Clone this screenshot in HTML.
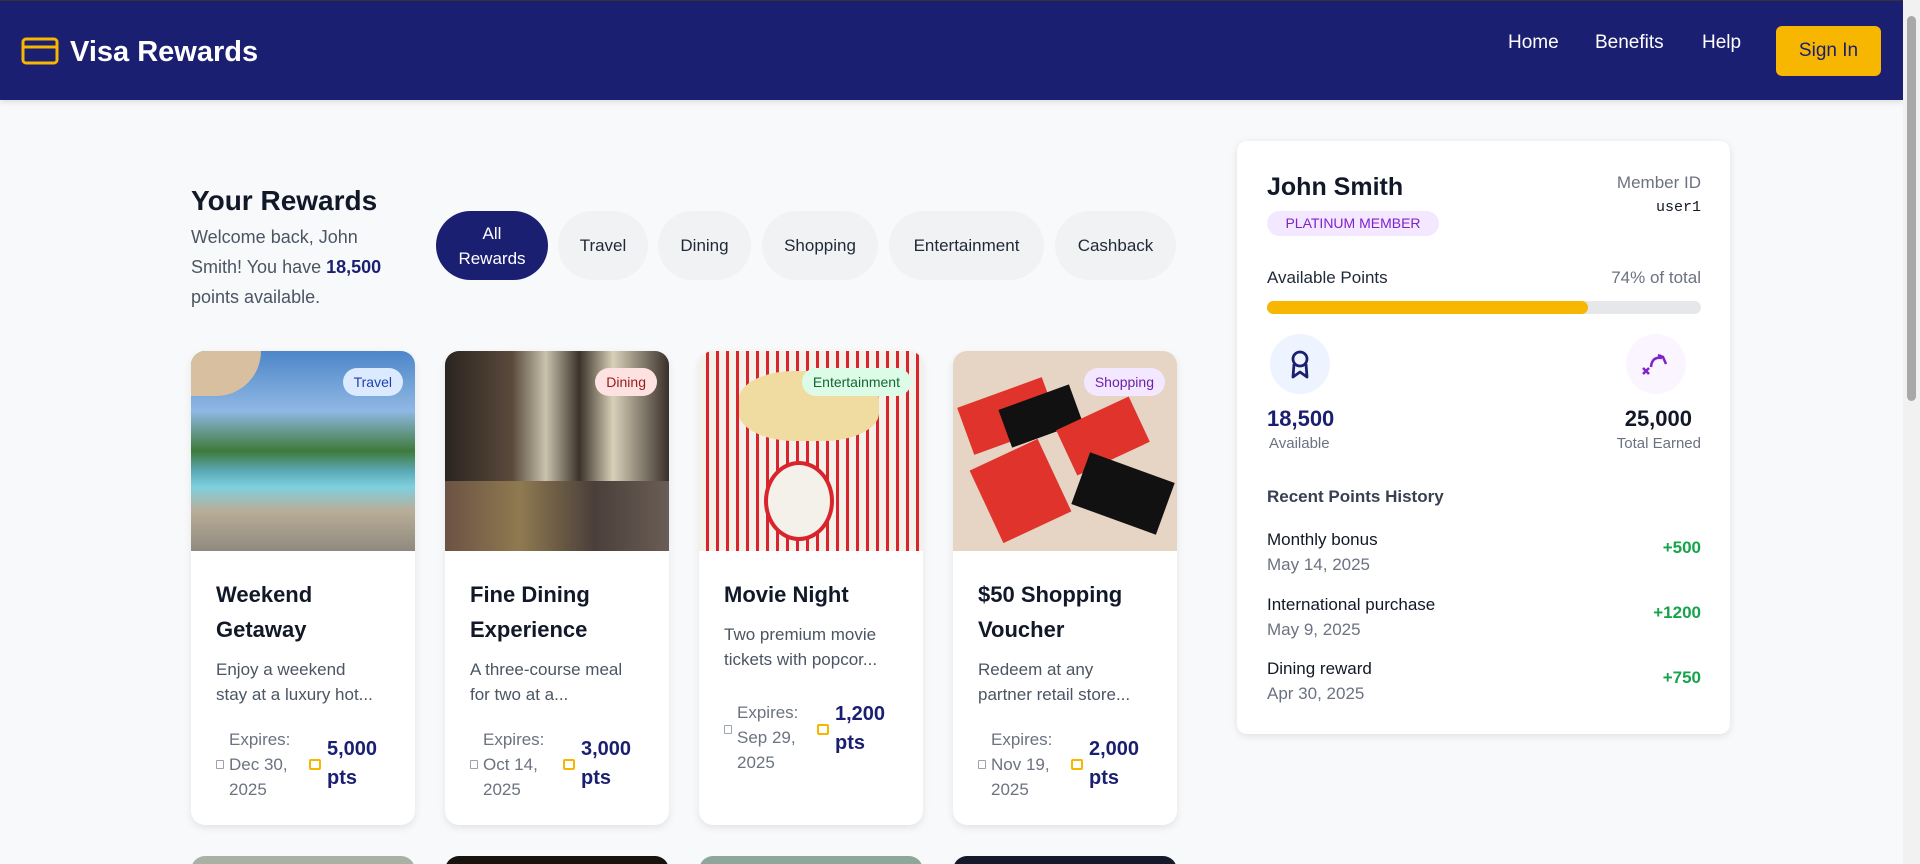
<!DOCTYPE html>
<html><head><meta charset="utf-8"><style>
*{box-sizing:border-box;margin:0;padding:0}
html,body{width:1920px;height:864px;overflow:hidden}
body{background:#f8f9fb;font-family:"Liberation Sans",sans-serif;color:#111827;position:relative}
.abs{position:absolute}
.hdr{left:0;top:0;width:1903px;height:100px;background:#1a1f71;border-top:1px solid #333;box-shadow:0 2px 6px rgba(0,0,0,.12)}
.nav{color:#fff;font-size:19px;top:32px}
.pill{top:211px;height:69px;border-radius:35px;background:#f1f2f4;font-size:17px;color:#1f2937;display:flex;align-items:center;justify-content:center;text-align:center;line-height:25px}
.card{width:224px;height:474px;top:351px;background:#fff;border-radius:14px;overflow:hidden;box-shadow:0 3px 8px rgba(0,0,0,.09)}
.img{position:absolute;left:0;top:0;width:224px;height:200px}
.badge{position:absolute;top:17px;right:12px;height:28px;line-height:28px;padding:0 11px;border-radius:14px;font-size:14px}
.t{position:absolute;left:25px;font-size:22px;font-weight:bold;line-height:35px;color:#111827}
.d{position:absolute;left:25px;font-size:17px;line-height:25px;color:#4b5563}
.ex{position:absolute;left:38px;font-size:17px;line-height:25px;color:#6b7280}
.pt{position:absolute;left:136px;font-size:20px;font-weight:bold;line-height:29px;color:#1a1f71}
.cal{position:absolute;left:25px;width:8px;height:9px;border:1.5px solid #9ca3af;border-radius:1px}
.wal{position:absolute;left:118px;width:12px;height:11px;border:2px solid #f7b600;border-radius:2px}
.r2{top:856px;height:40px;width:224px;border-radius:14px 14px 0 0}
.rr{right:219px;text-align:right}
</style></head><body>
<div class="abs hdr"></div>
<svg class="abs" style="left:21px;top:37px" width="38" height="28" viewBox="0 0 38 28"><rect x="2" y="2" width="34" height="24" rx="3" fill="none" stroke="#f7b600" stroke-width="3"/><line x1="2" y1="10" x2="36" y2="10" stroke="#f7b600" stroke-width="3"/></svg>
<div class="abs" style="left:70px;top:36px;color:#fff;font-size:29px;font-weight:bold">Visa Rewards</div>
<div class="abs nav" style="left:1508px">Home</div>
<div class="abs nav" style="left:1595px">Benefits</div>
<div class="abs nav" style="left:1702px">Help</div>
<div class="abs" style="left:1776px;top:26px;width:105px;height:50px;background:#f7b600;border-radius:6px;color:#1a1f71;font-size:19px;text-align:center;line-height:50px">Sign In</div>
<div class="abs" style="left:1903px;top:0;width:17px;height:864px;background:#f1f1f1"></div>
<div class="abs" style="left:1907px;top:16px;width:9px;height:385px;background:#a8a8a8;border-radius:5px"></div>

<div class="abs" style="left:191px;top:185px;font-size:28px;font-weight:bold">Your Rewards</div>
<div class="abs" style="left:191px;top:222px;font-size:18px;line-height:30px;color:#4b5563">Welcome back, John<br>Smith! You have <b style="color:#1a1f71">18,500</b><br>points available.</div>
<div class="abs pill" style="left:436px;width:112px;background:#1a1f71;color:#fff">All<br>Rewards</div>
<div class="abs pill" style="left:558px;width:90px">Travel</div>
<div class="abs pill" style="left:658px;width:93px">Dining</div>
<div class="abs pill" style="left:762px;width:116px">Shopping</div>
<div class="abs pill" style="left:889px;width:155px">Entertainment</div>
<div class="abs pill" style="left:1055px;width:121px">Cashback</div>

<div class="abs card" style="left:191px">
<div class="img" style="background:linear-gradient(180deg,#4d86c9 0%,#8fb8e3 30%,#3f7a3c 50%,#5aa9b5 60%,#7fd0df 68%,#b9ad98 80%,#8f8a7e 100%)"></div>
<div class="abs" style="left:0;top:0;width:70px;height:45px;background:#d8bfa0;border-radius:0 0 50px 0"></div>
<div class="badge" style="background:#dbeafe;color:#1e40af">Travel</div>
<div class="t" style="top:226px">Weekend<br>Getaway</div>
<div class="d" style="top:306px">Enjoy a weekend<br>stay at a luxury hot...</div>
<div class="cal" style="top:409px"></div><div class="ex" style="top:376px">Expires:<br>Dec 30,<br>2025</div>
<div class="wal" style="top:408px"></div><div class="pt" style="top:384px">5,000<br>pts</div>
</div>
<div class="abs card" style="left:445px">
<div class="img" style="background:linear-gradient(90deg,#2a241f,#5a4a3c 30%,#c9c2ad 45%,#3b322a 60%,#d8d0b8 75%,#3a302a);"></div>
<div class="abs" style="left:0;top:130px;width:224px;height:70px;background:linear-gradient(90deg,#6b5244,#8f7a50,#4a3f3a,#6a5d55)"></div>
<div class="badge" style="background:#fee2e2;color:#991b1b">Dining</div>
<div class="t" style="top:226px">Fine Dining<br>Experience</div>
<div class="d" style="top:306px">A three-course meal<br>for two at a...</div>
<div class="cal" style="top:409px"></div><div class="ex" style="top:376px">Expires:<br>Oct 14,<br>2025</div>
<div class="wal" style="top:408px"></div><div class="pt" style="top:384px">3,000<br>pts</div>
</div>
<div class="abs card" style="left:699px">
<div class="img" style="background:repeating-linear-gradient(90deg,#f4f0ea 0 7px,#d9242c 7px 10px)"></div>
<div class="abs" style="left:40px;top:20px;width:140px;height:70px;background:#f0dca0;border-radius:40%"></div>
<div class="abs" style="left:65px;top:110px;width:70px;height:80px;border:4px solid #d9242c;border-radius:50%;background:#f4f0ea"></div>
<div class="badge" style="background:#dcfce7;color:#166534">Entertainment</div>
<div class="t" style="top:226px">Movie Night</div>
<div class="d" style="top:271px">Two premium movie<br>tickets with popcor...</div>
<div class="cal" style="top:374px"></div><div class="ex" style="top:349px">Expires:<br>Sep 29,<br>2025</div>
<div class="wal" style="top:373px"></div><div class="pt" style="top:349px">1,200<br>pts</div>
</div>
<div class="abs card" style="left:953px">
<div class="img" style="background:#e6d5c5"></div>
<div class="abs" style="left:10px;top:40px;width:90px;height:50px;background:#e0332b;transform:rotate(-20deg)"></div>
<div class="abs" style="left:50px;top:45px;width:75px;height:40px;background:#111;transform:rotate(-20deg)"></div>
<div class="abs" style="left:110px;top:60px;width:80px;height:50px;background:#e0332b;transform:rotate(-25deg)"></div>
<div class="abs" style="left:30px;top:100px;width:75px;height:80px;background:#e0332b;transform:rotate(-25deg)"></div>
<div class="abs" style="left:125px;top:115px;width:90px;height:55px;background:#111;transform:rotate(20deg)"></div>
<div class="badge" style="background:#f3e8ff;color:#6b21a8">Shopping</div>
<div class="t" style="top:226px">$50 Shopping<br>Voucher</div>
<div class="d" style="top:306px">Redeem at any<br>partner retail store...</div>
<div class="cal" style="top:409px"></div><div class="ex" style="top:376px">Expires:<br>Nov 19,<br>2025</div>
<div class="wal" style="top:408px"></div><div class="pt" style="top:384px">2,000<br>pts</div>
</div>
<div class="abs r2" style="left:191px;background:#a9b0a4"></div>
<div class="abs r2" style="left:445px;background:#1a120c"></div>
<div class="abs r2" style="left:699px;background:#8fa79a"></div>
<div class="abs r2" style="left:953px;background:#141a2a"></div>

<div class="abs" style="left:1237px;top:141px;width:493px;height:593px;background:#fff;border-radius:10px;box-shadow:0 2px 8px rgba(0,0,0,.1)"></div>
<div class="abs" style="left:1267px;top:173px;font-size:25px;font-weight:bold">John Smith</div>
<div class="abs" style="left:1267px;top:211px;width:172px;height:25px;border-radius:13px;background:#f3e8ff;color:#7e22ce;font-size:14px;text-align:center;line-height:25px">PLATINUM MEMBER</div>
<div class="abs rr" style="top:173px;font-size:17px;color:#6b7280">Member ID</div>
<div class="abs rr" style="top:199px;font-size:15px;font-family:'Liberation Mono',monospace">user1</div>
<div class="abs" style="left:1267px;top:268px;font-size:17px;color:#1f2937">Available Points</div>
<div class="abs rr" style="top:268px;font-size:17px;color:#6b7280">74% of total</div>
<div class="abs" style="left:1267px;top:301px;width:434px;height:13px;border-radius:7px;background:#e5e7eb"></div>
<div class="abs" style="left:1267px;top:301px;width:321px;height:13px;border-radius:7px;background:#f7b600"></div>
<div class="abs" style="left:1270px;top:334px;width:60px;height:60px;border-radius:50%;background:#eef4ff"></div>
<svg class="abs" style="left:1288px;top:349px" width="24" height="30" viewBox="0 0 24 30"><circle cx="12" cy="10" r="7" fill="none" stroke="#1a1f71" stroke-width="2.8"/><path d="M6 15 L5 28 L12 23 L19 28 L18 15" fill="none" stroke="#1a1f71" stroke-width="2.8" stroke-linejoin="round"/></svg>
<div class="abs" style="left:1626px;top:334px;width:60px;height:60px;border-radius:50%;background:#faf5ff"></div>
<svg class="abs" style="left:1640px;top:349px" width="32" height="30" viewBox="0 0 32 30"><path d="M11 18 Q12 7 22 9" fill="none" stroke="#7e22ce" stroke-width="2.5"/><path d="M18 6 L23 8 L26 15" fill="none" stroke="#7e22ce" stroke-width="2.5"/><path d="M3 19 L9 25 M9 19 L3 25" stroke="#7e22ce" stroke-width="2.5"/></svg>
<div class="abs" style="left:1267px;top:406px;font-size:22px;font-weight:bold;color:#1a1f71">18,500</div>
<div class="abs" style="left:1269px;top:435px;font-size:15px;color:#6b7280">Available</div>
<div class="abs rr" style="top:406px;font-size:22px;font-weight:bold;right:228px">25,000</div>
<div class="abs rr" style="top:435px;font-size:15px;color:#6b7280">Total Earned</div>
<div class="abs" style="left:1267px;top:487px;font-size:17px;font-weight:bold;color:#374151">Recent Points History</div>
<div class="abs" style="left:1267px;top:527px;font-size:17px;line-height:25px">Monthly bonus<br><span style="color:#6b7280">May 14, 2025</span></div>
<div class="abs rr" style="top:538px;font-size:17px;font-weight:bold;color:#16a34a">+500</div>
<div class="abs" style="left:1267px;top:592px;font-size:17px;line-height:25px">International purchase<br><span style="color:#6b7280">May 9, 2025</span></div>
<div class="abs rr" style="top:603px;font-size:17px;font-weight:bold;color:#16a34a">+1200</div>
<div class="abs" style="left:1267px;top:656px;font-size:17px;line-height:25px">Dining reward<br><span style="color:#6b7280">Apr 30, 2025</span></div>
<div class="abs rr" style="top:668px;font-size:17px;font-weight:bold;color:#16a34a">+750</div>
</body></html>
